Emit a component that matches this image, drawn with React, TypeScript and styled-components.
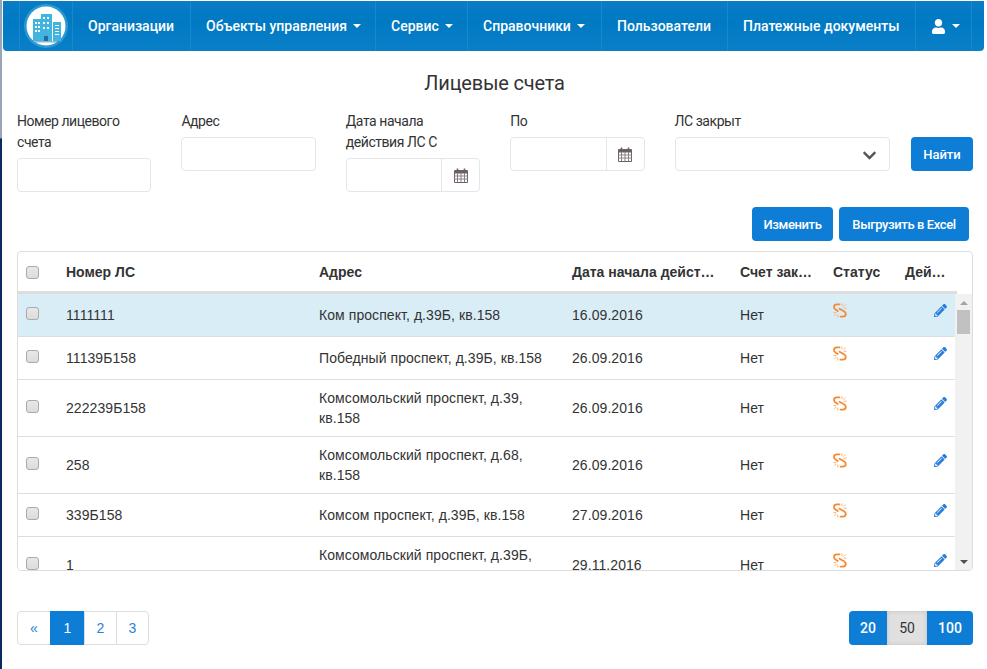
import React from "react";
import styled, { createGlobalStyle } from "styled-components";
import { FaChevronDown, FaPencilAlt, FaUser } from "react-icons/fa";

const GlobalStyle = createGlobalStyle`
  * { box-sizing: border-box; }
  html, body { margin: 0; padding: 0; background: #fff; }
  body { font-family: "Liberation Sans", Arial, sans-serif; font-size: 14px; color: #333; }
`;

type Account = { id: string; address: string; date: string; selected?: boolean };

const accounts: Account[] = [
  { id: "1111111", address: "Ком проспект, д.39Б, кв.158", date: "16.09.2016", selected: true },
  { id: "11139Б158", address: "Победный проспект, д.39Б, кв.158", date: "26.09.2016" },
  { id: "222239Б158", address: "Комсомольский проспект, д.39, кв.158", date: "26.09.2016" },
  { id: "258", address: "Комсомольский проспект, д.68, кв.158", date: "26.09.2016" },
  { id: "339Б158", address: "Комсом проспект, д.39Б, кв.158", date: "27.09.2016" },
  { id: "1", address: "Комсомольский проспект, д.39Б, кв.158", date: "29.11.2016" },
];

const Logo = () => (
  <svg width="44" height="44" viewBox="0 0 44 44">
    <circle cx="22" cy="22" r="22" fill="#4fb0dc" opacity="0.55" />
    <circle cx="22" cy="22" r="19.5" fill="#fff" />
    <path d="M9 15h8v22H9z M17 10h11v27H17z M29 18h8v19h-8z" fill="#42b4e0" />
    <path
      d="M11 18h2v2h-2z M14 18h2v2h-2z M11 22h2v2h-2z M14 22h2v2h-2z M11 26h2v2h-2z M14 26h2v2h-2z M19 13h2v2h-2z M23 13h2v2h-2z M19 18h2v2h-2z M23 18h2v2h-2z M19 23h2v2h-2z M23 23h2v2h-2z M31 21h4v1h-4z M31 24h4v1h-4z M31 27h4v1h-4z M31 30h4v1h-4z"
      fill="#fff"
    />
    <path d="M20 32h4v5h-4z" fill="#1f6d9c" />
    <path d="M11 37h24v1.500H11z" fill="#1f6d9c" opacity="0.5" />
  </svg>
);

const CalendarIcon = () => (
  <svg width="14" height="15" viewBox="0 0 14 15">
    <path d="M.5 2.500h13v12H.5z" fill="none" stroke="#6b5f68" />
    <path d="M1 3h12v2.500H1z" fill="#6b5f68" />
    <path d="M3.500 0.500v3M10.500 0.500v3" stroke="#6b5f68" strokeWidth="1.600" />
    <path d="M0 8h14M0 11h14M3.500 5v9M7 5v9M10.500 5v9" stroke="#8a8087" strokeWidth="1" />
  </svg>
);

const BrokenLink = () => (
  <svg width="14" height="15" viewBox="0 0 14 15">
    <g fill="none" stroke="#f58a33" strokeWidth="1.800" strokeLinecap="round">
      <path d="M6.500 1.300H4Q1 1.300 1 4Q1 5.500 2.500 6.500L4.800 8" />
      <path d="M6.500 5.800L11 8.300Q13 9.600 12.800 11.200Q12.500 13.600 10 13.600H7.500" />
    </g>
    <g stroke="#f9b27a" strokeWidth="1" strokeLinecap="round">
      <path d="M9 .8v2M10.800 3.400L12.400 1.800M11 5.200h2.200" />
      <path d="M.8 9.600H3M1.600 12.600L3.200 11M4.800 14v-2" />
    </g>
  </svg>
);

const Checkbox = () => <Check type="checkbox" />;

export default function App() {
  return (
    <Page>
      <GlobalStyle />
      <Navbar>
        <Brand>
          <Logo />
        </Brand>
        <NavItem $width={118}>Организации</NavItem>
        <NavItem $width={185}>
          Объекты управления <Caret />
        </NavItem>
        <NavItem $width={92}>
          Сервис <Caret />
        </NavItem>
        <NavItem $width={134}>
          Справочники <Caret />
        </NavItem>
        <NavItem $width={126}>Пользователи</NavItem>
        <NavItem $width={185}>Платежные документы</NavItem>
        <UserItem $width={57}>
          <FaUser size={15} /> <Caret />
        </UserItem>
      </Navbar>

      <Title>Лицевые счета</Title>

      <Filters>
        <Field>
          <Label>Номер лицевого счета</Label>
          <Input />
        </Field>
        <Field>
          <Label>Адрес</Label>
          <Input />
        </Field>
        <Field>
          <Label>Дата начала действия ЛС С</Label>
          <DateInput>
            <DateText />
            <DateAddon>
              <CalendarIcon />
            </DateAddon>
          </DateInput>
        </Field>
        <Field>
          <Label>По</Label>
          <DateInput>
            <DateText />
            <DateAddon>
              <CalendarIcon />
            </DateAddon>
          </DateInput>
        </Field>
        <SelectField>
          <Label>ЛС закрыт</Label>
          <SelectBox>
            <FaChevronDown size={15} />
          </SelectBox>
        </SelectField>
        <FindButton $width={62}>Найти</FindButton>
      </Filters>

      <Actions>
        <Button $width={81}>Изменить</Button>
        <Button $width={130}>Выгрузить в Excel</Button>
      </Actions>

      <Panel>
        <HeadTable>
          <Cols />
          <thead>
            <tr>
              <HeadCell $center>
                <Checkbox />
              </HeadCell>
              <HeadCell>Номер ЛС</HeadCell>
              <HeadCell>Адрес</HeadCell>
              <HeadCell>Дата начала действия ЛС</HeadCell>
              <HeadCell>Счет закрыт</HeadCell>
              <HeadCell>Статус</HeadCell>
              <HeadCell>Действия</HeadCell>
            </tr>
          </thead>
        </HeadTable>
        <PanelBody>
          <Rows>
            <BodyTable>
              <Cols />
              <tbody>
                {accounts.map((a) => (
                  <Row key={a.id} $selected={a.selected}>
                    <Cell $center>
                      <Checkbox />
                    </Cell>
                    <Cell>{a.id}</Cell>
                    <Cell>{a.address}</Cell>
                    <Cell>{a.date}</Cell>
                    <Cell>Нет</Cell>
                    <Cell>
                      <StatusIcon>
                        <BrokenLink />
                      </StatusIcon>
                    </Cell>
                    <Cell>
                      <EditIcon>
                        <FaPencilAlt size={13} />
                      </EditIcon>
                    </Cell>
                  </Row>
                ))}
              </tbody>
            </BodyTable>
          </Rows>
          <Scrollbar>
            <ArrowUp />
            <Thumb />
            <ArrowDown />
          </Scrollbar>
        </PanelBody>
      </Panel>

      <Footer>
        <Pager>
          <PageLink $width={34}>«</PageLink>
          <PageLink $width={35} $active>
            1
          </PageLink>
          <PageLink $width={33}>2</PageLink>
          <PageLink $width={33}>3</PageLink>
        </Pager>
        <Sizes>
          <SizeButton $width={38}>20</SizeButton>
          <SizeButton $width={40} $active>
            50
          </SizeButton>
          <SizeButton $width={46}>100</SizeButton>
        </Sizes>
      </Footer>
    </Page>
  );
}

const Cols = () => (
  <colgroup>
    <col style={{ width: 38 }} />
    <col style={{ width: 253 }} />
    <col style={{ width: 253 }} />
    <col style={{ width: 168 }} />
    <col style={{ width: 93 }} />
    <col style={{ width: 72 }} />
    <col style={{ width: 62 }} />
  </colgroup>
);

const Page = styled.div`
  width: 987px;
  height: 669px;
  overflow: hidden;
  border-left: 2px solid #0a2a5e;
  border-image: linear-gradient(to bottom, #9aa5b5 0, #9aa5b5 138px, #0a2a5e 140px, #0a2a5e 100%) 1;
  padding: 1px 3px 0 1px;
`;

const Navbar = styled.nav`
  display: flex;
  height: 50px;
  padding-left: 16px;
  border-radius: 0 0 4px 4px;
  background: linear-gradient(to bottom, #0a7cc6 0, #0079c3 40%, #0a7fc8 100%);
  font-family: Roboto, sans-serif;
  font-size: 14px;
  color: #fff;
`;

const Brand = styled.div`
  display: flex;
  align-items: center;
  justify-content: center;
  width: 53px;
  border-left: 1px solid #1a88cc;
`;

const NavItem = styled.div<{ $width: number }>`
  display: flex;
  align-items: center;
  gap: 4px;
  width: ${(p) => p.$width}px;
  padding-left: 15px;
  border-left: 1px solid #1a88cc;
  font-weight: 500;
  white-space: nowrap;
`;

const UserItem = styled(NavItem)`
  margin-left: 3px;
  border-right: 1px solid #1a88cc;
`;

const Caret = styled.span`
  display: inline-block;
  width: 0;
  height: 0;
  margin-left: 2px;
  border-top: 4px solid #fff;
  border-left: 4px solid transparent;
  border-right: 4px solid transparent;
`;

const Title = styled.h1`
  margin: 20px 0 0;
  height: 40px;
  padding-left: 2px;
  line-height: 24px;
  text-align: center;
  font-family: Roboto, sans-serif;
  font-size: 20px;
  font-weight: 400;
  letter-spacing: -0.2px;
  color: #333;
`;

const Filters = styled.div`
  display: flex;
  align-items: flex-start;
  padding-left: 14px;
  font-family: Roboto, sans-serif;
`;

const Field = styled.div`
  width: 164.4px;
  padding-right: 30px;
`;

const SelectField = styled(Field)`
  width: 236.4px;
  padding-right: 21px;
`;

const Label = styled.label`
  display: block;
  width: 125px;
  margin-bottom: 5px;
  font-size: 14px;
  line-height: 21px;
  letter-spacing: -0.45px;
  color: #333;
`;

const Input = styled.div`
  height: 34px;
  border: 1px solid #e3e6ea;
  border-radius: 4px;
  background: #fff;
`;

const DateInput = styled(Input)`
  display: flex;
`;

const DateText = styled.div`
  flex: 1;
`;

const DateAddon = styled.div`
  display: flex;
  align-items: center;
  justify-content: center;
  width: 38px;
  border-left: 1px solid #e3e6ea;
`;

const SelectBox = styled(Input)`
  display: flex;
  align-items: center;
  justify-content: flex-end;
  padding: 2px 12px 0 0;
  color: #555;
`;

const Button = styled.button<{ $width: number }>`
  width: ${(p) => p.$width}px;
  height: 34px;
  padding: 0;
  border: 0;
  border-radius: 4px;
  background: #0d7dd6;
  color: #fff;
  font-family: Roboto, sans-serif;
  font-size: 13px;
  font-weight: 500;
  letter-spacing: -0.4px;
`;

const FindButton = styled(Button)`
  margin-top: 26px;
  letter-spacing: 0;
`;

const Actions = styled.div`
  display: flex;
  justify-content: flex-end;
  gap: 6px;
  margin-top: 15px;
  padding-right: 15px;
`;

const Panel = styled.div`
  width: 956px;
  height: 320px;
  margin: 10px 0 0 14px;
  overflow: hidden;
  border: 1px solid #ddd;
  border-radius: 4px;
`;

const HeadTable = styled.table`
  width: 939px;
  table-layout: fixed;
  border-collapse: separate;
  border-spacing: 0;
`;

const BodyTable = styled(HeadTable)``;

const HeadCell = styled.th<{ $center?: boolean }>`
  height: 42px;
  padding: ${(p) => (p.$center ? "4px 0 0" : "1px 10px 0")};
  border-bottom: 3px solid #ddd;
  overflow: hidden;
  text-align: ${(p) => (p.$center ? "center" : "left")};
  text-overflow: ellipsis;
  white-space: nowrap;
  font-size: 14px;
  font-weight: 700;
  color: #333;
`;

const PanelBody = styled.div`
  display: flex;
  height: 276px;
`;

const Rows = styled.div`
  width: 939px;
  overflow: hidden;
`;

const Row = styled.tr<{ $selected?: boolean }>`
  background: ${(p) => (p.$selected ? "#d9edf7" : "#fff")};
`;

const Cell = styled.td<{ $center?: boolean }>`
  height: 43px;
  padding: ${(p) => (p.$center ? "0" : "8px 10px")};
  border-bottom: 1px solid #ddd;
  line-height: 20px;
  letter-spacing: 0.07px;
  text-align: ${(p) => (p.$center ? "center" : "left")};
  color: #333;
`;

const Check = styled.input`
  appearance: none;
  display: block;
  width: 13px;
  height: 13px;
  margin: 0 0 3px 8px;
  border: 1px solid #aaa;
  border-radius: 3px;
  background: linear-gradient(to bottom, #e8e8e8, #dcdcdc);
`;

const StatusIcon = styled.span`
  display: block;
  height: 20px;
  margin-top: -4px;
`;

const EditIcon = styled.span`
  display: block;
  height: 20px;
  margin-top: -6px;
  padding-left: 29px;
  color: #2a7fdc;
`;

const Scrollbar = styled.div`
  display: flex;
  flex-direction: column;
  align-items: center;
  width: 17px;
  background: #f1f1f1;
`;

const ArrowUp = styled.span`
  width: 0;
  height: 0;
  margin-top: 7px;
  border-bottom: 4px solid #a3a3a3;
  border-left: 4px solid transparent;
  border-right: 4px solid transparent;
`;

const Thumb = styled.div`
  width: 13px;
  height: 24px;
  margin-top: 5px;
  background: #c1c1c1;
`;

const ArrowDown = styled.span`
  width: 0;
  height: 0;
  margin-top: auto;
  margin-bottom: 6px;
  border-top: 4px solid #505050;
  border-left: 4px solid transparent;
  border-right: 4px solid transparent;
`;

const Footer = styled.div`
  display: flex;
  justify-content: space-between;
  width: 956px;
  margin: 40px 0 0 14px;
`;

const Pager = styled.div`
  display: flex;
  height: 34px;
`;

const PageLink = styled.span<{ $width: number; $active?: boolean }>`
  display: flex;
  align-items: center;
  justify-content: center;
  width: ${(p) => p.$width}px;
  margin-right: -1px;
  border: 1px solid ${(p) => (p.$active ? "#0d7dd6" : "#ddd")};
  background: ${(p) => (p.$active ? "#0d7dd6" : "#fff")};
  color: ${(p) => (p.$active ? "#fff" : "#2a7fdc")};

  &:first-child {
    border-radius: 4px 0 0 4px;
  }

  &:last-child {
    margin-right: 0;
    border-radius: 0 4px 4px 0;
  }
`;

const Sizes = styled.div`
  display: flex;
  height: 34px;
  overflow: hidden;
  border-radius: 4px;
`;

const SizeButton = styled.span<{ $width: number; $active?: boolean }>`
  display: flex;
  align-items: center;
  justify-content: center;
  width: ${(p) => p.$width}px;
  background: ${(p) => (p.$active ? "#e0e0e0" : "#0d7dd6")};
  box-shadow: ${(p) => (p.$active ? "inset 0 0 4px rgba(0, 0, 0, 0.15)" : "none")};
  color: ${(p) => (p.$active ? "#333" : "#fff")};
  font-family: Roboto, sans-serif;
  font-size: 14px;
  font-weight: ${(p) => (p.$active ? 400 : 500)};
`;
